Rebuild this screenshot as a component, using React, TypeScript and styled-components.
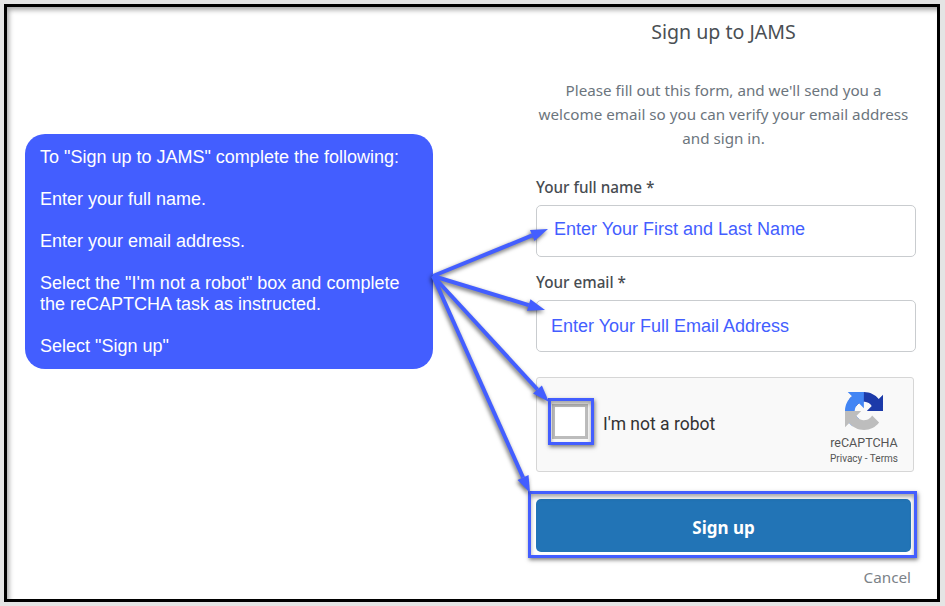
import React from "react";
import styled, { createGlobalStyle } from "styled-components";

const Global = createGlobalStyle`
  html, body { margin: 0; padding: 0; background: #fff; overflow: hidden; }
  * { box-sizing: border-box; }
`;

const Blue = "#435eff";

const Page = styled.div`
  width: 945px;
  height: 606px;
  padding: 4px 5px 4px 4px;
  background: #e4e4e4;
`;

const Frame = styled.div`
  position: relative;
  width: 936px;
  height: 598px;
  border: 3px solid #000;
  background: #fff;
  box-shadow: inset 3px 4px 5px -1px rgba(0, 0, 0, 0.35);
  display: grid;
  grid-template-columns: 408px 380px;
  column-gap: 103px;
  padding-left: 18px;
`;

const Callout = styled.div`
  margin-top: 127px;
  height: 235px;
  background: ${Blue};
  border-radius: 20px;
  padding: 12.5px 15px 0 15px;
  color: #fff;
  font: 18px/21px "Liberation Sans", Arial, sans-serif;
  white-space: nowrap;
`;

const Line = styled.div<{ $gap?: boolean }>`
  margin-top: ${(p) => (p.$gap ? "21px" : "0")};
`;

const Form = styled.div`
  display: flex;
  flex-direction: column;
  font-family: "Noto Sans", "Open Sans", sans-serif;
`;

const Title = styled.h1`
  margin: 11px 0 0;
  padding-right: 5px;
  font-size: 19.6px;
  line-height: 28px;
  font-weight: 400;
  color: #4a4f54;
  text-align: center;
`;

const Intro = styled.p`
  margin: 32px 0 0;
  padding-right: 5px;
  font-size: 15.2px;
  line-height: 24px;
  color: #6c757d;
  text-align: center;
  white-space: nowrap;
`;

const Label = styled.label<{ $top: number }>`
  margin-top: ${(p) => p.$top}px;
  font-size: 15.25px;
  line-height: 20px;
  font-weight: 500;
  color: #474c51;
`;

const Field = styled.div<{ $indent: number; $lift: number }>`
  margin-top: 8px;
  height: 52px;
  border: 1px solid #c9cccf;
  border-radius: 5px;
  padding-left: ${(p) => p.$indent}px;
  padding-bottom: ${(p) => p.$lift}px;
  display: flex;
  align-items: center;
  color: ${Blue};
  font: 18px "Liberation Sans", Arial, sans-serif;
  background: #fff;
`;

const Captcha = styled.div`
  margin-top: 25px;
  width: 378px;
  height: 95px;
  border: 1px solid #d6d6d6;
  border-radius: 3px;
  background: #f9f9f9;
  display: flex;
  align-items: center;
  padding: 0 15px 0 15px;
  font-family: Roboto, sans-serif;
`;

const Check = styled.div`
  width: 36px;
  height: 35px;
  margin-top: -6px;
  background: #fff;
  border: 3px solid #bcbcbc;
`;

const CaptchaText = styled.span`
  margin-left: 15px;
  font-size: 17.5px;
  color: #333;
  flex: 1;
  margin-top: -2px;
`;

const Brand = styled.div`
  width: 68px;
  margin-top: 7px;
  display: flex;
  flex-direction: column;
  align-items: center;
  color: #555;
`;

const Logo = styled.svg`
  width: 38px;
  height: 38px;
  display: block;
`;

const BrandName = styled.div`
  font-size: 12.5px;
  line-height: 14px;
  margin-top: 6px;
`;

const BrandLinks = styled.div`
  font-size: 10px;
  line-height: 12px;
  margin-top: 3px;
  white-space: nowrap;
`;

const Submit = styled.button`
  margin-top: 27px;
  width: 375px;
  height: 53px;
  border: 0;
  border-radius: 5px;
  padding: 3px 0 0;
  background: #2274b6;
  color: #fff;
  font: 700 17px "Noto Sans", "Open Sans", sans-serif;
`;

const Cancel = styled.div`
  width: 375px;
  margin-top: 14px;
  text-align: right;
  font-size: 15.25px;
  line-height: 22px;
  color: #7b8288;
`;

const Highlight = styled.div<{ $x: number; $y: number; $w: number; $h: number }>`
  position: absolute;
  left: ${(p) => p.$x}px;
  top: ${(p) => p.$y}px;
  width: ${(p) => p.$w}px;
  height: ${(p) => p.$h}px;
  border: 3px solid ${Blue};
  box-shadow: 1px 2px 4px rgba(0, 0, 0, 0.5), inset 0 3px 4px rgba(0, 0, 0, 0.35);
  pointer-events: none;
`;

const Arrows = styled.svg`
  position: absolute;
  left: -7px;
  top: -7px;
  width: 945px;
  height: 606px;
  pointer-events: none;
  filter: drop-shadow(-1px 2px 2px rgba(0, 0, 0, 0.6));
`;

const arrows: [number, number, number, number][] = [
  [548, 229, 433, 276],
  [545, 310, 433, 276],
  [549, 402, 433, 276],
  [530, 493, 433, 276],
];

function Arrow({ t }: { t: [number, number, number, number] }) {
  const [x, y, sx, sy] = t;
  const a = Math.atan2(y - sy, x - sx);
  const len = 17;
  const w = 6;
  const bx = x - Math.cos(a) * len;
  const by = y - Math.sin(a) * len;
  const nx = -Math.sin(a) * w;
  const ny = Math.cos(a) * w;
  return (
    <g>
      <line x1={sx} y1={sy} x2={bx} y2={by} stroke={Blue} strokeWidth={4} />
      <polygon points={`${x},${y} ${bx + nx},${by + ny} ${bx - nx},${by - ny}`} fill={Blue} />
    </g>
  );
}

export default function App() {
  return (
    <>
      <Global />
      <Page>
        <Frame>
          <Callout>
            <Line>To "Sign up to JAMS" complete the following:</Line>
            <Line $gap>Enter your full name.</Line>
            <Line $gap>Enter your email address.</Line>
            <Line $gap>Select the "I'm not a robot" box and complete</Line>
            <Line>the reCAPTCHA task as instructed.</Line>
            <Line $gap>Select "Sign up"</Line>
          </Callout>
          <Form>
            <Title>Sign up to JAMS</Title>
            <Intro>
              <Line>Please fill out this form, and we'll send you a</Line>
              <Line>welcome email so you can verify your email address</Line>
              <Line>and sign in.</Line>
            </Intro>
            <Label $top={27}>Your full name *</Label>
            <Field $indent={17} $lift={4}>Enter Your First and Last Name</Field>
            <Label $top={15}>Your email *</Label>
            <Field $indent={14} $lift={0}>Enter Your Full Email Address</Field>
            <Captcha>
              <Check />
              <CaptchaText>I'm not a robot</CaptchaText>
              <Brand>
                <Logo viewBox="0 0 64 64">
                  <path
                    d="M64 31.955l-.033-1.37V4.687l-7.16 7.16C50.948 4.674 42.033.093 32.05.093c-10.4 0-19.622 4.96-25.458 12.64l11.736 11.86a15.55 15.55 0 0 1 4.754-5.334c2.05-1.6 4.952-2.906 8.968-2.906.485 0 .86.057 1.135.163 4.976.393 9.288 3.14 11.828 7.124l-8.307 8.307c10.522-.04 22.4-.066 27.295.005"
                    fill="#1c3aa9"
                  />
                  <path
                    d="M31.862.094l-1.37.033H4.594l7.16 7.16C4.58 13.147 0 22.06 0 32.046c0 10.4 4.96 19.622 12.64 25.458L24.5 45.768a15.55 15.55 0 0 1-5.334-4.754c-1.6-2.05-2.906-4.952-2.906-8.968 0-.485.057-.86.163-1.135.393-4.976 3.14-9.288 7.124-11.828l8.307 8.307c-.04-10.522-.066-22.4.005-27.295"
                    fill="#4285f4"
                  />
                  <path
                    d="M.001 32.045l.033 1.37v25.898l7.16-7.16c5.86 7.173 14.774 11.754 24.76 11.754 10.4 0 19.622-4.96 25.458-12.64l-11.736-11.86a15.55 15.55 0 0 1-4.754 5.334c-2.05 1.6-4.952 2.906-8.968 2.906-.485 0-.86-.057-1.135-.163-4.976-.393-9.288-3.14-11.828-7.124l8.307-8.307c-10.522.04-22.4.066-27.295-.005"
                    fill="#bdbdbd"
                  />
                </Logo>
                <BrandName>reCAPTCHA</BrandName>
                <BrandLinks>Privacy - Terms</BrandLinks>
              </Brand>
            </Captcha>
            <Submit>Sign up</Submit>
            <Cancel>Cancel</Cancel>
          </Form>
          <Highlight $x={541} $y={391} $w={46} $h={47} />
          <Highlight $x={521} $y={484} $w={389} $h={67} />
          <Arrows viewBox="0 0 945 606">
            {arrows.map((t) => (
              <Arrow key={t[1]} t={t} />
            ))}
          </Arrows>
        </Frame>
      </Page>
    </>
  );
}
